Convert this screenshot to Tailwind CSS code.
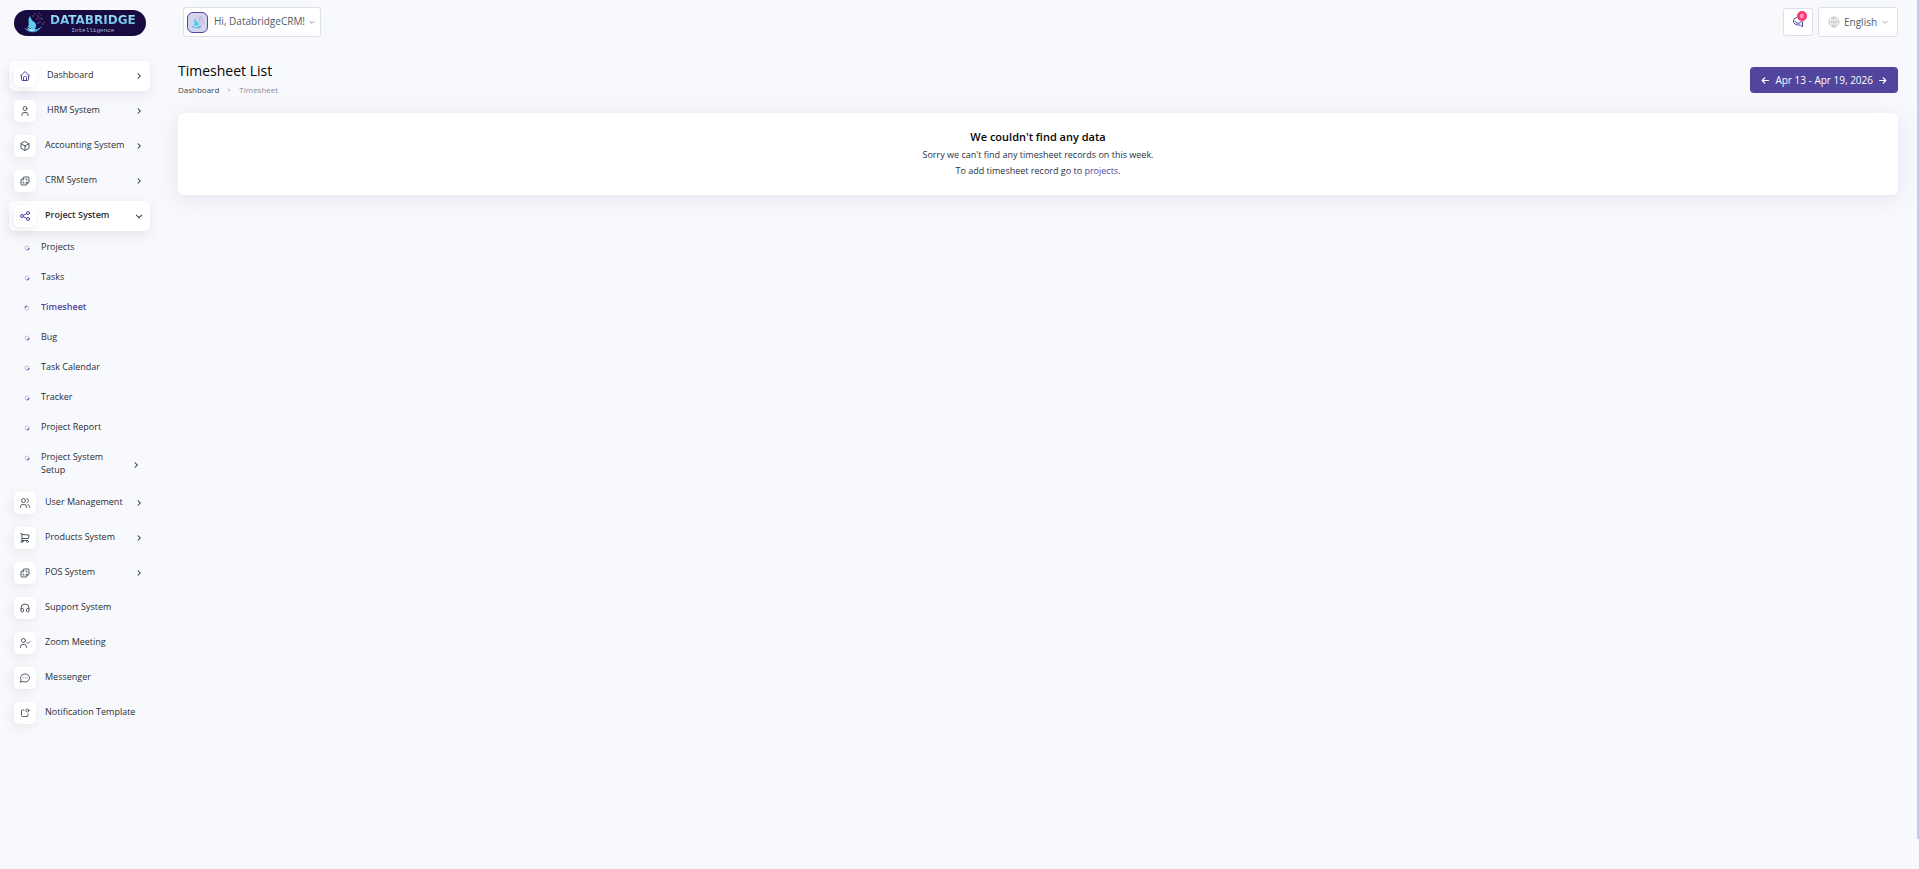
<!DOCTYPE html>
<html lang="en">
<head>
<meta charset="utf-8">
<title>Timesheet List</title>
<script src="https://cdn.jsdelivr.net/npm/@tailwindcss/browser@4"></script>
</head>
<body class="min-h-screen bg-[#f8f9fd] font-['Open_Sans',sans-serif] text-[#293240]">
<svg class="hidden" aria-hidden="true">
  <symbol id="home" viewBox="0 0 24 24"><path d="M5 12H3l9-9 9 9h-2M5 12v7a2 2 0 0 0 2 2h10a2 2 0 0 0 2-2v-7M9 21v-6a2 2 0 0 1 2-2h2a2 2 0 0 1 2 2v6"/></symbol>
  <symbol id="user" viewBox="0 0 24 24"><circle cx="12" cy="7" r="4"/><path d="M6 21v-2a4 4 0 0 1 4-4h4a4 4 0 0 1 4 4v2"/></symbol>
  <symbol id="box" viewBox="0 0 24 24"><path d="M12 3l8 4.500v9L12 21l-8-4.500v-9zM12 12l8-4.500M12 12v9M12 12L4 7.500"/></symbol>
  <symbol id="layers" viewBox="0 0 24 24"><path d="M16 16v2a2 2 0 0 1-2 2H6a2 2 0 0 1-2-2v-8a2 2 0 0 1 2-2h2V6a2 2 0 0 1 2-2h8a2 2 0 0 1 2 2v8a2 2 0 0 1-2 2h-2M10 8H8v2M8 14v2h2M14 8h2v2M16 14v2h-2"/></symbol>
  <symbol id="share" viewBox="0 0 24 24"><circle cx="6" cy="12" r="3"/><circle cx="18" cy="6" r="3"/><circle cx="18" cy="18" r="3"/><path d="M8.700 10.700l6.600-3.400M8.700 13.300l6.600 3.400"/></symbol>
  <symbol id="users" viewBox="0 0 24 24"><circle cx="9" cy="7" r="4"/><path d="M3 21v-2a4 4 0 0 1 4-4h4a4 4 0 0 1 4 4v2M16 3.130a4 4 0 0 1 0 7.750M21 21v-2a4 4 0 0 0-3-3.850"/></symbol>
  <symbol id="cart" viewBox="0 0 24 24"><circle cx="6" cy="19" r="2"/><circle cx="17" cy="19" r="2"/><path d="M17 17H6V3H4M6 5l14 1-1 7H6"/></symbol>
  <symbol id="headphones" viewBox="0 0 24 24"><rect x="4" y="13" width="5" height="7" rx="2"/><rect x="15" y="13" width="5" height="7" rx="2"/><path d="M4 15v-3a8 8 0 0 1 16 0v3"/></symbol>
  <symbol id="user-check" viewBox="0 0 24 24"><circle cx="9" cy="7" r="4"/><path d="M3 21v-2a4 4 0 0 1 4-4h4a4 4 0 0 1 4 4v2M16 11l2 2 4-4"/></symbol>
  <symbol id="message" viewBox="0 0 24 24"><path d="M3 20l1.300-3.900A9 8 0 1 1 7.700 19L3 20M12 12v.010M8 12v.010M16 12v.010"/></symbol>
  <symbol id="notification" viewBox="0 0 24 24"><path d="M10 6H7a2 2 0 0 0-2 2v9a2 2 0 0 0 2 2h9a2 2 0 0 0 2-2v-3"/><circle cx="17" cy="7" r="3"/></symbol>
  <symbol id="chev-r" viewBox="0 0 24 24"><path d="M9 6l6 6-6 6"/></symbol>
  <symbol id="chev-d" viewBox="0 0 24 24"><path d="M5 9l7 7 7-7"/></symbol>
  <symbol id="arrow" viewBox="0 0 24 24"><path d="M3 12h18M13 4l8 8-8 8"/></symbol>
  <symbol id="bullet" viewBox="0 0 8 8"><circle cx="4" cy="4" r="2" stroke="#c3c2d6"/><path d="M6 4a2 2 0 0 1-2 2" stroke="#51459d"/></symbol>
  <symbol id="bird" viewBox="0 0 24 24">
    <path d="M8 5c-3 4 0 7-2 11l5 3c4-2 4-6 1-8-2-2-3-3-4-6z" fill="#5ccdf0"/>
    <path d="M2 17c5 6 14 6 18-2-4 4-11 5-18 2z" fill="#3f9fe0"/>
    <path d="M5 15c1 3 5 4 9 3-2 3-8 3-9-3z" fill="#d9f8ff"/>
    <g fill="#a15a8c"><circle cx="13" cy="3" r=".700"/><circle cx="16" cy="5" r=".800"/><circle cx="19" cy="4" r=".600"/><circle cx="15" cy="8" r=".700"/><circle cx="20" cy="8" r=".800"/><circle cx="18" cy="11" r=".700"/><circle cx="22" cy="11" r=".600"/></g>
    <g fill="#4c7fc4"><circle cx="11" cy="5" r=".700"/><circle cx="17" cy="2" r=".600"/><circle cx="18" cy="7" r=".700"/><circle cx="21" cy="13" r=".700"/><circle cx="16" cy="12" r=".700"/></g>
  </symbol>
</svg>
<div class="flex min-h-screen">
  <aside class="w-[159px] shrink-0 pr-[9px]">
    <a href="#" aria-label="Databridge Intelligence" class="mt-[10px] ml-[14px] flex h-[26px] w-[132px] items-center rounded-full bg-[#170b3f] pl-2">
      <svg class="size-[24px] shrink-0"><use href="#bird"/></svg>
      <span class="ml-[4px] flex flex-col items-center font-['DejaVu_Sans',sans-serif]">
        <span class="bg-linear-to-b from-[#a8e8f8] to-[#58b4e0] bg-clip-text text-[12px] leading-[14px] font-bold text-transparent">DATABRIDGE</span>
        <span class="font-['Liberation_Mono',monospace] text-[6px] leading-[7px] text-[#b9bcd8]">Intelligence</span>
      </span>
    </a>
    <nav class="mt-[25px] ml-[9px] text-[9px] leading-[13px] text-[#2a2d33]">
      <ul id="menu" class="flex flex-col gap-[5px]"></ul>
    </nav>
  </aside>
  <div class="flex min-w-0 flex-1 flex-col pr-[19px] pl-[19px]">
    <header class="flex items-center justify-between pt-[7px] pl-[5px]">
      <button class="flex h-[30px] items-center rounded-[3px] border border-[#dcdfe6] bg-white pr-1 pl-[3px] text-[10px] text-[#525b69]">
        <span class="flex size-[21px] items-center justify-center rounded-[6px] border border-[#51459d] bg-[#d3d5ec]"><svg class="size-[15px]"><use href="#bird"/></svg></span>
        <span class="mb-px ml-[6px]">Hi, DatabridgeCRM!</span>
        <svg class="ml-[3px] size-[8px] fill-none stroke-[#8b929c] stroke-3"><use href="#chev-d"/></svg>
      </button>
      <div class="flex items-center gap-[5px]">
        <button aria-label="Messages" class="relative flex h-[28px] w-[30px] items-center justify-center rounded-[3px] border border-[#dcdfe6] bg-white">
          <svg viewBox="0 0 24 24" class="size-[12px] fill-none stroke-[#51459d] stroke-2"><path d="M10 3a7 7 0 0 0-7 7c0 5 4 8 9 8h5l4 4v-8c1-2 1-4 1-6M6 10c1 6 11 6 13 0"/></svg>
          <span class="absolute top-[2px] left-[13px] flex size-[10px] items-center justify-center rounded-full bg-[#ff3a6e] text-[6px] font-semibold text-white">0</span>
        </button>
        <div class="flex h-[30px] items-center rounded-[3px] border border-[#dcdfe6] bg-white pr-2 pl-[9px]">
          <svg viewBox="0 0 24 24" class="size-[12px] fill-none stroke-[#c4c4c4]"><circle cx="12" cy="12" r="10" stroke-width="2"/><path stroke-width="2" d="M2 12h20M12 2v20M12 2c-6 5-6 15 0 20M12 2c6 5 6 15 0 20"/></svg>
          <select id="lang" aria-label="Language" class="mb-px ml-[4px] h-5 appearance-none text-[10px] leading-5 text-[#525b69]"><option>English</option></select>
          <svg class="ml-[3px] size-[8px] fill-none stroke-[#a3a8b0] stroke-3"><use href="#chev-d"/></svg>
        </div>
      </div>
    </header>
    <main class="mt-[23px]">
      <div class="flex items-end justify-between">
        <div>
          <h1 class="text-[14px] leading-[22px] text-[#060606]">Timesheet List</h1>
          <nav aria-label="Breadcrumb" class="mt-[2px] mb-px flex items-center text-[8px] leading-[12px]">
            <a href="#" class="text-[#3c4452]">Dashboard</a>
            <svg class="mx-[7px] size-[6px] fill-none stroke-[#8b929c] stroke-3"><use href="#chev-r"/></svg>
            <span class="text-[#848b96]">Timesheet</span>
          </nav>
        </div>
        <div class="mb-1 flex h-[26px] items-center gap-[5px] rounded-[4px] bg-[#51459d] px-[11px] text-[10px] text-white">
          <button aria-label="Previous week"><svg class="block size-[9px] rotate-180 fill-none stroke-white stroke-3"><use href="#arrow"/></svg></button>
          <span>Apr 13 - Apr 19, 2026</span>
          <button aria-label="Next week"><svg class="block size-[9px] fill-none stroke-white stroke-3"><use href="#arrow"/></svg></button>
        </div>
      </div>
      <section class="mt-4 rounded-[6px] bg-white py-4 text-center shadow-[0_4px_20px_rgba(182,186,203,0.3)]">
        <h2 class="text-[11px] leading-4 font-semibold text-[#060606]">We couldn't find any data</h2>
        <p class="mt-[2px] text-[9px] leading-4">Sorry we can't find any timesheet records on this week.<br>To add timesheet record go to <a href="#" class="text-[#51459d]">projects</a>.</p>
      </section>
    </main>
  </div>
  <div class="h-[839px] w-[2px] shrink-0 bg-[#c3cceb]" aria-hidden="true"></div>
</div>
<script>
const items = [
  ['home', 'Dashboard', 'r', 'hover'], ['user', 'HRM System', 'r'], ['box', 'Accounting System', 'r'], ['layers', 'CRM System', 'r'],
  ['share', 'Project System', 'd', 'open'], ['users', 'User Management', 'r'], ['cart', 'Products System', 'r'], ['layers', 'POS System', 'r'],
  ['headphones', 'Support System'], ['user-check', 'Zoom Meeting'], ['message', 'Messenger'], ['notification', 'Notification Template']
];
const subs = ['Projects', 'Tasks', 'Timesheet', 'Bug', 'Task Calendar', 'Tracker', 'Project Report', 'Project System Setup'];
const chev = d => `<svg class="size-[10px] shrink-0 fill-none stroke-[#293240] stroke-[2.5]"><use href="#chev-${d}"/></svg>`;
const sub = s => `<li><a href="#" class="flex min-h-[30px] items-start pt-[7px] pb-[9px] pr-[9px] pl-[14px] ${s === 'Timesheet' ? 'font-semibold text-[#51459d]' : ''}">
  <svg class="mt-[4px] size-[8px] shrink-0 fill-none ${s === 'Timesheet' ? 'rotate-180' : ''}"><use href="#bullet"/></svg>
  <span class="ml-[10px] w-[76px]">${s}</span>${s.endsWith('Setup') ? '<span class="mt-[10px] ml-[14px]">' + chev('r') + '</span>' : ''}</a></li>`;
document.getElementById('menu').innerHTML = items.map(([icon, label, dir, state], i) => `<li>
  <a href="#" class="flex h-[30px] items-center rounded-[6px] pr-[6px] pl-[5px] ${state ? 'bg-white shadow-[0_4px_12px_rgba(120,125,145,0.15)]' : ''}">
    <span class="flex size-[22px] shrink-0 items-center justify-center rounded-[5px] bg-white shadow-[-2px_3px_12px_rgba(0,0,0,0.08)]"><svg class="size-[12px] fill-none stroke-2 ${state ? 'stroke-[#51459d]' : 'stroke-[#525b69]'}" stroke-linecap="round" stroke-linejoin="round"><use href="#${icon}"/></svg></span>
    <span class="mb-[3px] flex-1 whitespace-nowrap ${i < 2 ? 'ml-[11px]' : 'ml-[9px]'} ${state === 'open' ? 'font-semibold' : ''}">${label}</span>${dir ? chev(dir) : ''}
  </a>${state === 'open' ? '<ul class="mt-[2px] -mb-[2px]">' + subs.map(sub).join('') + '</ul>' : ''}</li>`).join('');
</script>
</body>
</html>
